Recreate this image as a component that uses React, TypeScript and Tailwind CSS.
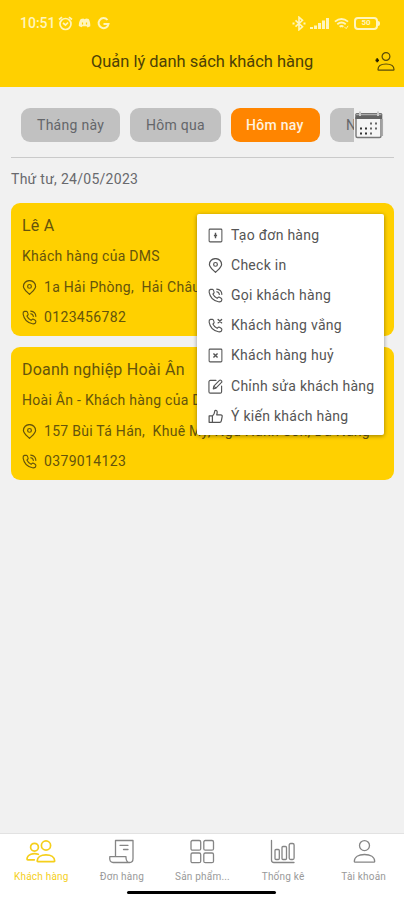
import type { ReactNode } from "react";

/* ─── Icons ─── */

type IconProps = { className?: string };

const Pin = ({ className = "" }: IconProps) => (
  <svg className={className} viewBox="0 0 16 16" fill="none" stroke="currentColor" strokeWidth="1.3" strokeLinejoin="round">
    <path d="M8 15.300C5 12.300 1.500 9.800 1.500 6.900a6.500 6.300 0 0 1 13 0C14.500 9.800 11 12.300 8 15.300Z" />
    <circle cx="8" cy="6.800" r="2" />
  </svg>
);

const handset =
  "M4.600 1.300 2.600 1.500C1.400 1.800 1 3 1.200 4.500c.9 5.200 4.600 9.200 9.900 10.200 1.800.3 3.400-.5 3.700-2.100.1-.8-.2-1.300-.8-1.700l-1.700-1c-.7-.4-1.300-.2-1.800.3l-.8.8C7.800 10.200 6.200 8.600 5.200 6.500l.9-.9c.5-.5.6-1.100.3-1.700l-.8-1.900c-.2-.5-.5-.7-1-.7Z";

const PhoneCall = ({ className = "" }: IconProps) => (
  <svg className={className} viewBox="0 0 16 16" fill="none" stroke="currentColor" strokeWidth="1.200" strokeLinecap="round" strokeLinejoin="round">
    <path d={handset} />
    <path d="M9.300 1.200a6 6 0 0 1 5.500 5.600M9.300 4a3.200 3.200 0 0 1 2.800 2.900" />
  </svg>
);

const PhoneMissed = ({ className = "" }: IconProps) => (
  <svg className={className} viewBox="0 0 16 16" fill="none" stroke="currentColor" strokeWidth="1.200" strokeLinecap="round" strokeLinejoin="round">
    <path d={handset} />
    <path d="m10.800 1.500 3.700 3.700M14.500 1.500l-3.700 3.700" strokeWidth="1.500" />
  </svg>
);

const BoxPlus = ({ className = "" }: IconProps) => (
  <svg className={className} viewBox="0 0 16 16" fill="none" stroke="currentColor" strokeWidth="1.100">
    <rect x="1.200" y="1.200" width="13.600" height="13.600" rx="1" />
    <path d="M8 5v6M6.300 8h3.400" strokeWidth="1.500" />
  </svg>
);

const BoxX = ({ className = "" }: IconProps) => (
  <svg className={className} viewBox="0 0 16 16" fill="none" stroke="currentColor" strokeWidth="1.100">
    <rect x="1.200" y="1.200" width="13.600" height="13.600" rx="1" />
    <path d="m5.800 5.800 4.400 4.400M10.200 5.800l-4.400 4.400" strokeWidth="1.500" />
  </svg>
);

const Edit = ({ className = "" }: IconProps) => (
  <svg className={className} viewBox="0 0 16 16" fill="none" stroke="currentColor" strokeWidth="1.200" strokeLinecap="round" strokeLinejoin="round">
    <path d="M8.500 1.500H2.500C1.600 1.500 1 2.100 1 3v10.500c0 .9.600 1.500 1.500 1.500H13c.9 0 1.500-.6 1.500-1.500V7.500" />
    <path d="m5.600 10.500.6-2.900 6-6.100c.5-.5 1.200-.5 1.700 0l.5.500c.5.500.5 1.200 0 1.700l-6 6-2.800.8ZM6.200 7.600l2.300 2.200" />
  </svg>
);

const ThumbUp = ({ className = "" }: IconProps) => (
  <svg className={className} viewBox="0 0 16 16" fill="none" stroke="currentColor" strokeWidth="1.300" strokeLinecap="round" strokeLinejoin="round">
    <path d="M4.700 14.200V7.400c1.500-1.300 2.400-2.900 2.500-5 0-1.500 2.500-1.300 2.600.6.100 1.200-.2 2.300-.5 3.200h4.200c1.400 0 1.800 1 1.600 2l-.9 4.500c-.2 1-.7 1.500-1.700 1.500H4.700ZM4.700 7.400H1.200v6.800h3.500" />
  </svg>
);

const AddPerson = () => (
  <svg className="h-5 w-5" viewBox="0 0 20 20" fill="none" stroke="#5b4c08" strokeWidth="1.200">
    <circle cx="11" cy="4.500" r="3.900" />
    <path d="M3 17.600c0-3.700 3.300-5.600 8-5.600s8 1.900 8 5.600c0 .4-.2.600-.6.600H3.600c-.4 0-.6-.2-.6-.6Z" />
    <path d="M2.200 6.300v4M.5 8.300h3.500" stroke="#251f00" strokeWidth="1.700" />
  </svg>
);

const Calendar = () => (
  <svg className="h-[30px] w-[30px]" viewBox="0 0 30 30">
    <path d="M2 8h25v18q0 1.500-1.500 1.500h-22Q2 27.500 2 26Z" fill="#f5f5f5" stroke="#777" strokeWidth="1.400" />
    <path d="M1.300 4.500Q1.300 3 2.800 3h24Q28.300 3 28.300 4.500V9H1.300Z" fill="#636363" />
    <path d="M2.200 4.500h25.200" stroke="#aaa" strokeWidth="1.500" />
    <path d="M6 1.500V6M24 1.500V6" stroke="#c8c8c8" strokeWidth="2" />
    <path d="M28.300 9v17" stroke="#aaa" strokeWidth="1.500" />
    <path d="M16 12.500h2v2h-2zM21 12.500h2v2h-2zM16 17.500h2v2h-2zM21 17.500h2v2h-2zM16 22.500h2v2h-2z" fill="#666" />
    <path d="M6 17.500h2v2H6zM11 17.500h2v2h-2zM6 22.500h2v2H6zM11 22.500h2v2h-2z" fill="#333" />
  </svg>
);

/* ─── Status bar ─── */

const StatusBar = () => (
  <div className="flex h-[46px] items-center px-5 text-[#fff5bd]">
    <span className="w-[38px] text-[14px] font-medium whitespace-nowrap">10:51</span>
    <svg className="h-[15px] w-[15px]" viewBox="0 0 15 15" fill="none" stroke="currentColor" strokeWidth="1.700">
      <circle cx="7.500" cy="8" r="5.500" />
      <path d="m1 3.500 3-2.300M14 3.500l-3-2.300M5 7l2.500 2L10 6.500" />
    </svg>
    <svg className="ml-[5px] h-[10px] w-[13px]" viewBox="0 0 12 10">
      <path d="M2.300 1 5 .5l.6.800L8 .5l2.200.5C11.500 3.500 12 6 11.800 8.300L9 9.500l-.8-1.300H4L3 9.300.3 8C.2 5.500.8 3 2.300 1Z" fill="currentColor" />
      <path d="M4 4.500v2M8 4.500v2" stroke="#ffd000" strokeWidth="1.200" />
    </svg>
    <svg className="ml-[6px] h-[13px] w-[13px]" viewBox="0 0 13 13" fill="none" stroke="currentColor" strokeWidth="2">
      <path d="M10.500 3A5 5 0 1 0 11.500 7H6.500" />
    </svg>
    <div className="ml-auto flex items-center">
      <svg className="h-[15px] w-[14px]" viewBox="0 0 14 15" fill="none" stroke="currentColor" strokeWidth="1.600">
        <path d="m3.500 4.300 7 6.400L7 13.800V1.200l3.500 3.100-7 6.400" />
        <path d="M.5 7.500h2M11.500 7.500h2" strokeWidth="2" />
      </svg>
      <svg className="ml-1 h-[12px] w-[19px]" viewBox="0 0 19 12" fill="currentColor">
        <path d="M0 10h3v2H0zM4 8.500h3V12H4zM8 6h3v6H8zM12 3.500h3V12h-3zM16 1h3v11h-3z" />
      </svg>
      <svg className="ml-[5px] h-[13px] w-[15px]" viewBox="0 0 16 13" fill="none" stroke="currentColor" strokeWidth="2">
        <path d="M1 4.500q7-5.500 14 0M3.500 7.200q4.500-3.600 9 0M6 10q2-1.700 4 0" />
        <path d="m11 10 2 2 2-3" strokeWidth="1" />
      </svg>
      <div className="ml-[5px] flex h-[13px] w-[24px] items-center justify-center rounded-[4px] border-2 border-current text-[8px] leading-none font-bold">50</div>
      <div className="mr-[4px] h-[5px] w-[2px] rounded-r bg-current" />
    </div>
  </div>
);

/* ─── Customer list ─── */

type Customer = { name: string; group: string; address: string; phone: string };

const customers: Customer[] = [
  { name: "Lê A", group: "Khách hàng của DMS", address: "1a Hải Phòng,\u00a0 Hải Châu", phone: "0123456782" },
  {
    name: "Doanh nghiệp Hoài Ân",
    group: "Hoài Ân - Khách hàng của DMS",
    address: "157 Bùi Tá Hán,\u00a0 Khuê Mỹ, Ngũ Hành Sơn, Đà Nẵng",
    phone: "0379014123",
  },
];

const CustomerCard = ({ name, group, address, phone }: Customer) => (
  <div className="h-[133px] overflow-hidden rounded-[9px] bg-[#ffd000] px-[11px] pt-[8px] whitespace-nowrap text-[#65540c]">
    <div className="flex h-[30px] items-center text-[16px] tracking-[0.220px]">{name}</div>
    <div className="flex h-[31px] items-center text-[14px] tracking-[0.280px]">{group}</div>
    <div className="flex h-[30px] items-center gap-[7px] text-[14px] tracking-[0.280px]">
      <Pin className="h-[15px] w-[15px] shrink-0" />
      {address}
    </div>
    <div className="flex h-[30px] items-center gap-[7px] text-[14px] tracking-[0.350px]">
      <PhoneCall className="h-[15px] w-[15px] shrink-0" />
      {phone}
    </div>
  </div>
);

const actions = [
  { icon: BoxPlus, label: "Tạo đơn hàng" },
  { icon: Pin, label: "Check in" },
  { icon: PhoneCall, label: "Gọi khách hàng" },
  { icon: PhoneMissed, label: "Khách hàng vắng" },
  { icon: BoxX, label: "Khách hàng huỷ" },
  { icon: Edit, label: "Chỉnh sửa khách hàng" },
  { icon: ThumbUp, label: "Ý kiến khách hàng" },
];

const ActionMenu = () => (
  <div className="absolute top-[11px] right-[10px] h-[221px] w-[187px] rounded-[2px] bg-white pt-[6px] pl-[11px] text-[#555] shadow-[0_1px_4px_rgba(0,0,0,0.4)]">
    {actions.map((a) => (
      <div key={a.label} className="flex h-[30.200px] items-center gap-[8px] text-[14px] tracking-[0.270px] whitespace-nowrap">
        <a.icon className="h-[15px] w-[15px] shrink-0" />
        {a.label}
      </div>
    ))}
  </div>
);

/* ─── Bottom tabs ─── */

const TabIcon = ({ children }: { children: ReactNode }) => (
  <svg className="h-[26px] w-[30px]" viewBox="0 0 30 26" fill="none" stroke="currentColor" strokeWidth="1.300" strokeLinejoin="round" strokeLinecap="round">
    {children}
  </svg>
);

const tabs = [
  {
    label: "Khách hàng",
    active: true,
    icon: (
      <g strokeWidth="1.700">
        <circle cx="20" cy="6.500" r="4.600" />
        <path d="M11.200 22c0-4 3.800-6.200 8.800-6.200s8.700 2.200 8.700 6.200q0 .6-.7.600H11.900q-.7 0-.7-.6Z" />
        <circle cx="8.500" cy="8.200" r="3.900" />
        <path d="M12.300 15.300c-5-1.700-11 .2-11.300 4.700q0 .8.800.8h6.500" />
      </g>
    ),
  },
  {
    label: "Đơn hàng",
    icon: (
      <>
        <path d="M8.500 17V1.500H26v18q0 4-3.300 4T19 19v-1.300H2.800c-.5 3.800.6 5.800 3.200 5.800h16.700" />
        <path d="M13 6.300h8M16.500 10.500H21" />
      </>
    ),
  },
  {
    label: "Sản phẩm...",
    icon: (
      <>
        <rect x="4" y="1.500" width="9.700" height="9.700" rx="1.500" />
        <rect x="16.800" y="1.500" width="9.700" height="9.700" rx="1.500" />
        <rect x="4" y="14" width="9.700" height="9.700" rx="1.500" />
        <rect x="16.800" y="14" width="9.700" height="9.700" rx="1.500" />
      </>
    ),
  },
  {
    label: "Thống kê",
    icon: (
      <>
        <path d="M3.500 1.500V21q0 2.500 2.500 2.500h20" />
        <rect x="7" y="10.500" width="4.300" height="10" rx="1" />
        <rect x="14" y="7.500" width="4.500" height="13" rx="1" />
        <rect x="21.200" y="4.500" width="4.900" height="16" rx="1.500" />
      </>
    ),
  },
  {
    label: "Tài khoản",
    icon: (
      <>
        <circle cx="15.500" cy="6.600" r="5" />
        <path d="M5.300 22.500c0-4.500 4.300-7 10.200-7s10.200 2.500 10.200 7q0 .7-.8.700H6.100q-.8 0-.8-.7Z" />
      </>
    ),
  },
];

const TabBar = () => (
  <nav className="relative grid h-[67px] grid-cols-5 border-t border-[#e2e2e2] bg-white pl-px">
    {tabs.map((tab) => (
      <div key={tab.label} className={tab.active ? "flex flex-col items-center pt-[5px] text-[#f5cf1b]" : "flex flex-col items-center pt-[5px] text-[#858585]"}>
        <TabIcon>{tab.icon}</TabIcon>
        <span className={tab.active ? "mt-[5px] text-[10px] leading-[14px] tracking-[0.200px]" : "mt-[5px] text-[10px] leading-[14px] tracking-[0.200px] text-[#999]"}>{tab.label}</span>
      </div>
    ))}
    <div className="absolute bottom-[6px] left-[127px] h-[3px] w-[149px] rounded-full bg-black" />
  </nav>
);

const chip = "flex h-[34px] shrink-0 items-center rounded-[9px] text-[14px] tracking-[0.280px] whitespace-nowrap";

export default function App() {
  return (
    <div className="flex h-[900px] w-[404px] flex-col overflow-hidden bg-[#f1f1f1] font-[Roboto,sans-serif]">
      <header className="h-[87px] bg-[#ffd000]">
        <StatusBar />
        <div className="flex h-[32px] items-center pr-[9px]">
          <h1 className="ml-[91px] text-[16.450px] whitespace-nowrap text-[#4d4107]">Quản lý danh sách khách hàng</h1>
          <div className="ml-auto"><AddPerson /></div>
        </div>
      </header>

      <main className="flex-1 pr-[10px] pl-[11px]">
        <div className="flex h-[71px] items-center border-b border-[#cacaca] pt-[6px] pl-[10px]">
          <div className="flex w-[333px] gap-[10px] overflow-hidden">
            <span className={`${chip} w-[99px] bg-[#c1c1c1] pl-[16px] text-[#64666a]`}>Tháng này</span>
            <span className={`${chip} w-[91px] bg-[#c1c1c1] pl-[16px] text-[#64666a]`}>Hôm qua</span>
            <span className={`${chip} w-[89px] bg-[#ff8500] pl-[15px] font-medium text-[#fff1df]`}>Hôm nay</span>
            <span className={`${chip} w-[91px] bg-[#c1c1c1] pl-[16px] text-[#64666a]`}>Ngày mai</span>
          </div>
          <Calendar />
        </div>
        <div className="flex h-[45px] items-center pb-[3px] text-[14px] tracking-[0.280px] text-[#68696d]">Thứ tư, 24/05/2023</div>
        <div className="relative flex flex-col gap-[11px]">
          {customers.map((c) => (
            <CustomerCard key={c.phone} {...c} />
          ))}
          <ActionMenu />
        </div>
      </main>

      <TabBar />
    </div>
  );
}
